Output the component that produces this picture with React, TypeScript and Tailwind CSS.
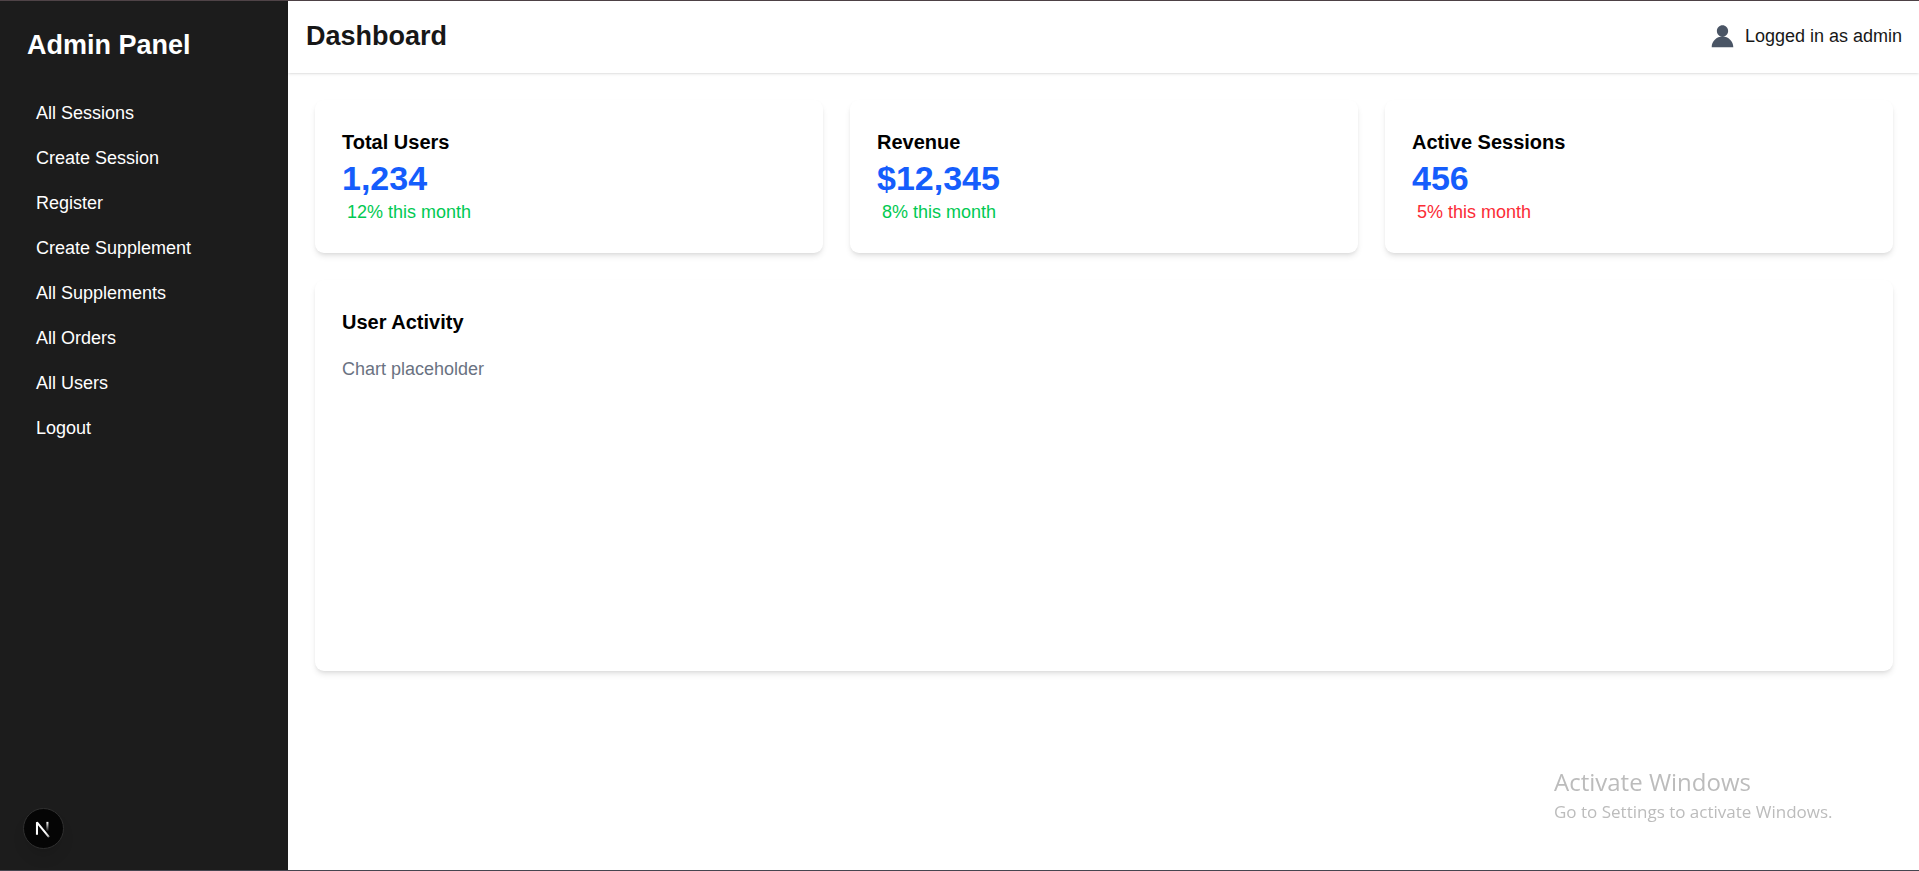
const navItems = [
  "All Sessions",
  "Create Session",
  "Register",
  "Create Supplement",
  "All Supplements",
  "All Orders",
  "All Users",
  "Logout",
];

const stats = [
  { title: "Total Users", value: "1,234", change: "12% this month", up: true },
  { title: "Revenue", value: "$12,345", change: "8% this month", up: true },
  { title: "Active Sessions", value: "456", change: "5% this month", up: false },
];

function UserIcon() {
  return (
    <svg viewBox="0 0 24 24" className="size-[27px] text-gray-600" fill="currentColor" aria-hidden="true">
      <path d="M12 12c2.76 0 5-2.24 5-5s-2.24-5-5-5-5 2.24-5 5 2.24 5 5 5zm0 0c-5.33 0-9.6 4.27-9.6 9.6h19.2c0-5.33-4.27-9.6-9.6-9.6z" />
    </svg>
  );
}

function Sidebar() {
  return (
    <aside className="w-72 shrink-0 bg-[#1c1c1c] p-[27px] text-white">
      <h2 className="mb-[29px] text-[27px] leading-[34px] font-bold">Admin Panel</h2>
      <nav>
        <ul>
          {navItems.map((item) => (
            <li key={item}>
              <a href="#" className="block rounded-sm p-[9px] hover:bg-white/10">
                {item}
              </a>
            </li>
          ))}
        </ul>
      </nav>
    </aside>
  );
}

function DevToolsButton() {
  return (
    <button
      type="button"
      aria-label="Open developer tools"
      className="fixed bottom-[22px] left-[23px] size-[41px] rounded-full border border-[#303030] bg-[#050505] shadow-lg"
    >
      <svg viewBox="0 0 39 39" className="size-full" fill="none" aria-hidden="true">
        <defs>
          <linearGradient id="diagonal" x1="9.5" y1="10.5" x2="13.6" y2="15.8" gradientUnits="userSpaceOnUse">
            <stop stopColor="white" />
            <stop offset="0.6" stopColor="white" stopOpacity="0.8" />
            <stop offset="1" stopColor="white" stopOpacity="0.2" />
          </linearGradient>
          <linearGradient id="stem" x1="11.8" y1="1" x2="11.8" y2="9.6" gradientUnits="userSpaceOnUse">
            <stop stopColor="white" />
            <stop offset="1" stopColor="white" stopOpacity="0" />
          </linearGradient>
        </defs>
        <g transform="translate(10.4 12) scale(1.1)">
          <path
            d="M13.3 14.6 L2.34 1.2 V12.4"
            stroke="url(#diagonal)"
            strokeWidth="1.86"
            strokeLinejoin="bevel"
          />
          <rect x="10.9" y="0.8" width="1.86" height="9" fill="url(#stem)" />
        </g>
      </svg>
    </button>
  );
}

export default function App() {
  return (
    <div className="flex min-h-screen border-t border-b border-t-[#4f4347] border-b-[#45454f] bg-white font-['Liberation_Sans',Arial,sans-serif] text-[18px] leading-[27px] text-[#171717]">
      <Sidebar />

      <div className="flex min-w-0 flex-1 flex-col">
        <header className="flex items-center justify-between bg-white pt-[17px] pr-[17px] pb-[19px] pl-[18px] shadow-sm">
          <h1 className="text-[27px] leading-9 font-bold">Dashboard</h1>
          <div className="flex items-center gap-[9px]">
            <UserIcon />
            <span>Logged in as admin</span>
          </div>
        </header>

        <main className="flex flex-col gap-[27px] py-[27px] pr-[26px] pl-[27px] text-black">
          <section className="grid grid-cols-3 gap-[27px]">
            {stats.map((stat) => (
              <article key={stat.title} className="rounded-[9px] bg-white p-[27px] shadow-md">
                <h3 className="text-[20px] leading-[30px] font-bold">{stat.title}</h3>
                <p className="text-[34px] leading-[42px] font-bold text-blue-600">{stat.value}</p>
                <p className={stat.up ? "pl-[5px] text-green-500" : "pl-[5px] text-red-500"}>{stat.change}</p>
              </article>
            ))}
          </section>

          <section className="rounded-[9px] bg-white p-[27px] shadow-md">
            <h3 className="mb-[19px] text-[20px] leading-[30px] font-bold">User Activity</h3>
            <div className="h-72 text-gray-500">Chart placeholder</div>
          </section>
        </main>
      </div>

      <DevToolsButton />

      <div className="pointer-events-none fixed right-20 bottom-[45px] w-[285px] font-['Open_Sans','Noto_Sans',sans-serif] text-[#bcbcbc]">
        <p className="text-[24px] leading-8">Activate Windows</p>
        <p className="text-[17px] leading-7 whitespace-nowrap">Go to Settings to activate Windows.</p>
      </div>
    </div>
  );
}
